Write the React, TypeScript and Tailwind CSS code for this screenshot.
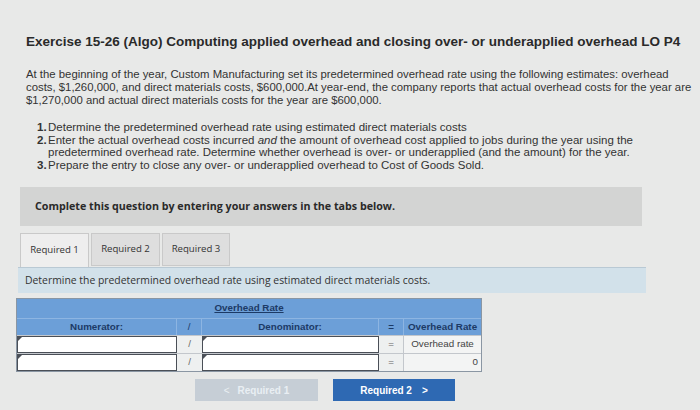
import React from 'react';

const sans = { fontFamily: '"Liberation Sans", Arial, sans-serif' };
const open = { fontFamily: '"Open Sans", "DejaVu Sans", sans-serif' };

const InputCell: React.FC = () => (
  <div className="relative h-full border-[1.5px] border-[#4a4f57] bg-white">
    <div className="absolute left-0 top-0 h-0 w-0 border-l-[4px] border-b-[4px] border-l-[#4a4f57] border-b-transparent" />
  </div>
);

const App: React.FC = () => {
  return (
    <div className="h-[410px] w-[700px] overflow-hidden bg-[#e8e9e8] text-[#2b2b2b]" style={sans}>
      <h1 className="pl-[26px] pt-[34px] text-[13.5px] font-bold leading-[16px] text-[#2a2a2a]">
        Exercise 15-26 (Algo) Computing applied overhead and closing over- or underapplied overhead LO P4
      </h1>

      <p className="mt-[18px] pl-[26px] text-[11.35px] leading-[13px] text-[#333]">
        At the beginning of the year, Custom Manufacturing set its predetermined overhead rate using the following estimates: overhead
        <br />
        costs, $1,260,000, and direct materials costs, $600,000.At year-end, the company reports that actual overhead costs for the year are
        <br />
        $1,270,000 and actual direct materials costs for the year are $600,000.
      </p>

      <ol className="mt-[14px] pl-[37px] text-[11.5px] leading-[12.5px] text-[#333]">
        <li className="flex">
          <span className="w-[11px] shrink-0 font-bold">1.</span>
          <span>Determine the predetermined overhead rate using estimated direct materials costs</span>
        </li>
        <li className="flex">
          <span className="w-[11px] shrink-0 font-bold">2.</span>
          <span>
            Enter the actual overhead costs incurred <i>and</i> the amount of overhead cost applied to jobs during the year using the
            <br />
            predetermined overhead rate. Determine whether overhead is over- or underapplied (and the amount) for the year.
          </span>
        </li>
        <li className="flex">
          <span className="w-[11px] shrink-0 font-bold">3.</span>
          <span>Prepare the entry to close any over- or underapplied overhead to Cost of Goods Sold.</span>
        </li>
      </ol>

      <div className="ml-[20px] mt-[16px] flex h-[39px] w-[622px] items-center bg-[#d3d4d3] pl-[15px]">
        <span className="text-[10.7px] font-bold text-[#2a2a2a]" style={open}>
          Complete this question by entering your answers in the tabs below.
        </span>
      </div>

      <div className="ml-[20px] mt-[7px] flex gap-[2px]" style={open}>
        <div className="flex h-[34px] w-[69px] items-center justify-center border border-b-0 border-[#c9c9c9] bg-[#eeeeee] text-[9.6px] text-[#333]">
          Required 1
        </div>
        <div className="flex h-[33px] w-[69px] items-center justify-center border border-[#c9c9c9] bg-[#dedede] text-[9.6px] text-[#333]">
          Required 2
        </div>
        <div className="flex h-[33px] w-[68px] items-center justify-center border border-[#c9c9c9] bg-[#dedede] text-[9.6px] text-[#333]">
          Required 3
        </div>
      </div>

      <div className="ml-[18px] flex h-[26px] w-[628px] items-center border-t border-[#b9c9d4] bg-[#d2e1ea] pl-[7px]">
        <span className="text-[10.4px] text-[#333]" style={open}>
          Determine the predetermined overhead rate using estimated direct materials costs.
        </span>
      </div>

      <div className="ml-[16px] mt-[5px] w-[466px] border border-[#8a96a3]" style={sans}>
        <div className="flex h-[19px] items-center justify-center bg-[#6c9fd8] text-[9.8px] font-bold text-[#1c3a66]">
          <span className="underline">Overhead Rate</span>
        </div>
        <div className="grid h-[17px] grid-cols-[160px_25px_177px_25px_77px] border-t border-[#8db5e2] bg-[#6c9fd8] text-[9.8px] font-bold text-[#1c3a66]">
          <div className="flex items-center justify-center border-r border-[#8db5e2]">Numerator:</div>
          <div className="flex items-center justify-center border-r border-[#8db5e2] font-normal">/</div>
          <div className="flex items-center justify-center border-r border-[#8db5e2]">Denominator:</div>
          <div className="flex items-center justify-center border-r border-[#8db5e2]">=</div>
          <div className="flex items-center justify-center">Overhead Rate</div>
        </div>
        {[0, 1].map((row) => (
          <div
            key={row}
            className="grid h-[18px] grid-cols-[160px_25px_177px_25px_77px] border-t border-[#c3c7cc] bg-[#eef0f0] text-[9.8px] text-[#444]"
          >
            <InputCell />
            <div className="flex items-center justify-center text-[#666]">/</div>
            <InputCell />
            <div className="flex items-center justify-center border-r border-[#c3c7cc] text-[#666]">=</div>
            {row === 0 ? (
              <div className="flex items-center justify-center bg-[#f3f4f4]">Overhead rate</div>
            ) : (
              <div className="flex items-center justify-end bg-[#f3f4f4] pr-[3px]">0</div>
            )}
          </div>
        ))}
      </div>

      <div className="ml-[195px] mt-[7px] flex gap-[15px]" style={sans}>
        <div className="flex h-[22px] w-[123px] items-center justify-center gap-[8px] bg-[#c6ced6] text-[10px] font-bold text-[#e9eef3]">
          <span className="font-normal">&lt;</span>
          <span>Required 1</span>
        </div>
        <div className="flex h-[22px] w-[122px] items-center justify-center gap-[10px] bg-[#2e69b3] text-[10px] font-bold text-white">
          <span>Required 2</span>
          <span>&gt;</span>
        </div>
      </div>
    </div>
  );
};

export default App;
